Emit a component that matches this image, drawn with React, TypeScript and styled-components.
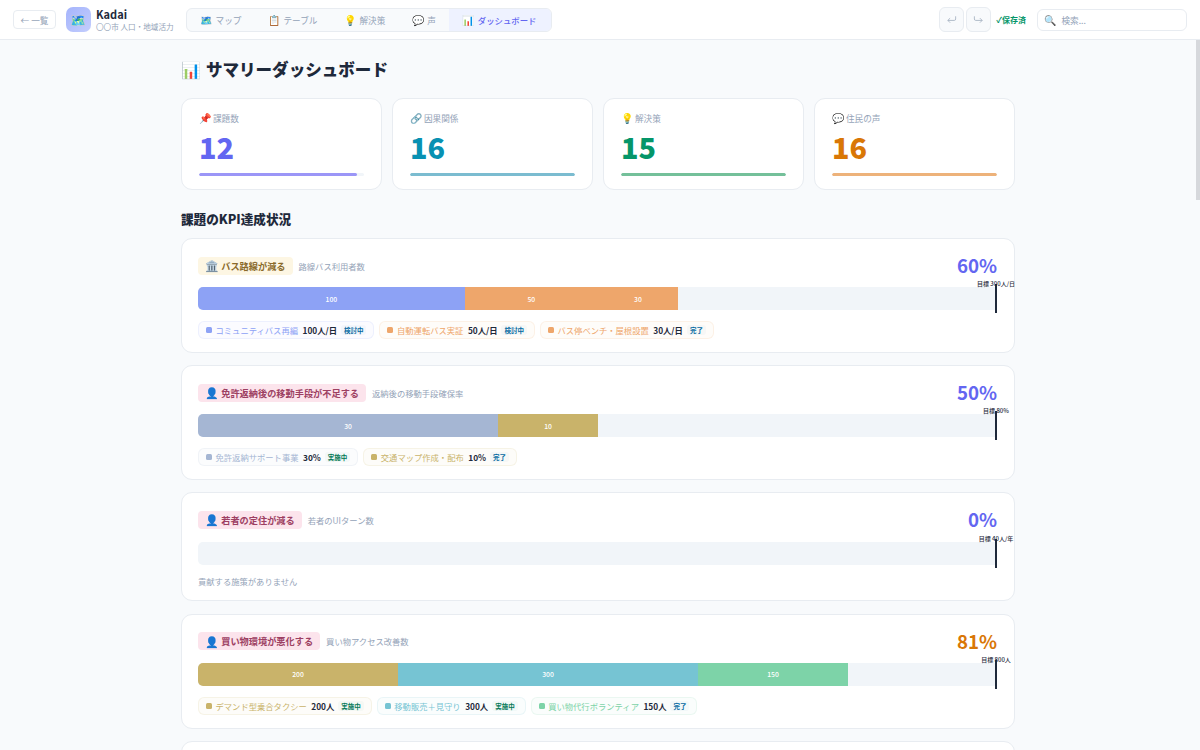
import { createGlobalStyle, styled } from "styled-components";

const GlobalStyle = createGlobalStyle`
  html, body {
    margin: 0;
    padding: 0;
    height: 100%;
    overflow: hidden;
  }
  body {
    font-family: "Noto Sans CJK JP", "Noto Sans", sans-serif;
    background: #f8fafc;
    color: #1e293b;
  }
  * {
    box-sizing: border-box;
  }
`;

const Shell = styled.div`
  position: relative;
  height: 100vh;
  display: flex;
  flex-direction: column;
`;

const Header = styled.header`
  height: 40px;
  flex: none;
  display: flex;
  align-items: center;
  padding: 0 13px;
  background: #fff;
  border-bottom: 1px solid #e8ecf1;
`;

const BackButton = styled.button`
  font: inherit;
  font-size: 8.64px;
  color: #94a3b8;
  height: 19px;
  width: 43px;
  padding: 0;
  margin-right: 10px;
  background: #fff;
  border: 1px solid #e8ecf1;
  border-radius: 4px;
`;

const Logo = styled.div`
  width: 25px;
  height: 25px;
  margin-right: 5px;
  border-radius: 7px;
  background: linear-gradient(135deg, #a5b4fc, #c3cdfd);
  display: flex;
  align-items: center;
  justify-content: center;
`;

const Brand = styled.div`
  display: flex;
  flex-direction: column;
  margin-right: 12px;
`;

const BrandName = styled.div`
  font-size: 11px;
  font-weight: 700;
  line-height: 14px;
  color: #1e293b;
`;

const BrandSub = styled.div`
  font-size: 7.6px;
  line-height: 11px;
  color: #94a3b8;
`;

const Tabs = styled.nav`
  display: flex;
  height: 24px;
  background: #f8fafc;
  border: 1px solid #e8ecf1;
  border-radius: 6px;
  overflow: hidden;
`;

const Tab = styled.div<{ $active?: boolean }>`
  display: flex;
  align-items: center;
  gap: 2.5px;
  padding: 0 ${(p) => (p.$active ? 15 : 13)}px 0 14px;
  font-size: ${(p) => (p.$active ? 8.4 : 8.64)}px;
  font-weight: ${(p) => (p.$active ? 500 : 400)};
  color: ${(p) => (p.$active ? "#6366f1" : "#94a3b8")};
  background: ${(p) => (p.$active ? "#eef2ff" : "transparent")};
`;

const Emoji = styled.span<{ $size?: number }>`
  font-size: ${(p) => p.$size ?? 10}px;
  font-family: "Noto Color Emoji", sans-serif;
  line-height: 1;
  margin-top: 2px;
`;

const HeaderRight = styled.div`
  margin-left: auto;
  display: flex;
  align-items: center;
  gap: 2px;
`;

const IconButton = styled.button`
  width: 25px;
  height: 25px;
  padding: 0;
  display: flex;
  align-items: center;
  justify-content: center;
  background: #f8fafc;
  color: #a3afc0;
  border: 1px solid #e8ecf1;
  border-radius: 6px;
`;

const Saved = styled.span`
  font-size: 8px;
  font-weight: 700;
  color: #059669;
  margin: 0 9px 0 3px;
`;

const Search = styled.div`
  width: 150px;
  height: 22px;
  display: flex;
  align-items: center;
  gap: 5px;
  padding: 0 6px;
  font-size: 8.64px;
  color: #94a3b8;
  background: #fff;
  border: 1px solid #e8ecf1;
  border-radius: 6px;
`;

const Scroller = styled.main`
  flex: 1;
  overflow: hidden;
  padding-right: 4px;
`;

const ScrollThumb = styled.div`
  position: absolute;
  top: 40px;
  right: 0;
  width: 4px;
  height: 160px;
  background: #d6d8dc;
`;

const Content = styled.div`
  width: 834px;
  margin: 0 auto;
  padding-top: 18px;
`;

const Title = styled.h1`
  margin: 0 0 17px;
  font-size: 16.56px;
  line-height: 23px;
  font-weight: 800;
  color: #1e293b;
  display: flex;
  align-items: center;
  gap: 5px;
`;

const StatGrid = styled.div`
  display: grid;
  grid-template-columns: repeat(4, 1fr);
  gap: 10px;
  margin-bottom: 18.5px;
`;

const Card = styled.section`
  background: #fff;
  border: 1px solid #e8ecf1;
  border-radius: 11px;
`;

const StatCard = styled(Card)`
  height: 92px;
  padding: 12px 17px;
`;

const StatLabel = styled.div`
  display: flex;
  align-items: center;
  gap: 1.5px;
  font-size: 8.64px;
  line-height: 14px;
  color: #94a3b8;
`;

const StatValue = styled.div<{ $color: string }>`
  font-size: 28.8px;
  font-weight: 900;
  line-height: 36px;
  color: ${(p) => p.$color};
  margin-top: 4px;
`;

const Progress = styled.div`
  height: 3.5px;
  margin-top: 7.5px;
  background: #f1f5f9;
  border-radius: 2px;
  overflow: hidden;
`;

const ProgressFill = styled.div<{ $color: string }>`
  height: 100%;
  background: ${(p) => p.$color};
  border-radius: 2px;
`;

const SectionTitle = styled.h2`
  margin: 0 0 10.5px;
  font-size: 12.6px;
  line-height: 19px;
  font-weight: 800;
  color: #1e293b;
`;

const KpiList = styled.div`
  display: flex;
  flex-direction: column;
  gap: 12.24px;
`;

const KpiCard = styled(Card)`
  padding: 18px 16px 13px;
`;

const PlaceholderCard = styled(Card)`
  height: 115px;
`;

const KpiHead = styled.div`
  display: flex;
  align-items: center;
  justify-content: space-between;
  height: 18px;
  margin-bottom: 12.2px;
  padding-right: 1px;
`;

const KpiTitle = styled.div`
  display: flex;
  align-items: center;
  gap: 6px;
  margin-top: -1px;
`;

const Tag = styled.span<{ $bg: string; $color: string }>`
  display: flex;
  align-items: center;
  gap: 2px;
  height: 18px;
  padding: 0 7px 0 7.5px;
  font-size: 9.2px;
  font-weight: 700;
  color: ${(p) => p.$color};
  background: ${(p) => p.$bg};
  border-radius: 4px;
`;

const Metric = styled.span`
  font-size: 8.3px;
  color: #94a3b8;
`;

const Percent = styled.span<{ $color: string }>`
  font-size: 18.72px;
  font-weight: 700;
  color: ${(p) => p.$color};
  margin-top: -3px;
`;

const BarWrap = styled.div`
  position: relative;
  height: 23px;
  margin-bottom: 10.8px;
`;

const Bar = styled.div`
  height: 100%;
  width: calc(100% - 3px);
  display: flex;
  background: #f1f5f9;
  border-radius: 5px 0 0 5px;
  overflow: hidden;
`;

const Segment = styled.div<{ $color: string }>`
  display: flex;
  align-items: center;
  justify-content: center;
  font-size: 6.8px;
  font-weight: 500;
  color: #fff;
  background: ${(p) => p.$color};
`;

const Marker = styled.div`
  position: absolute;
  top: -3px;
  right: 1px;
  width: 2px;
  height: 29px;
  background: #1e293b;
`;

const MarkerLabel = styled.span`
  position: absolute;
  top: -5px;
  left: 50%;
  transform: translateX(-50%);
  white-space: nowrap;
  font-size: 6px;
  line-height: 9px;
  font-weight: 500;
  color: #1e293b;
`;

const Chips = styled.div`
  display: flex;
  gap: 5px;
`;

const Chip = styled.div<{ $color: string }>`
  display: flex;
  align-items: center;
  height: 18px;
  padding: 0 7px;
  font-size: 8.3px;
  color: ${(p) => p.$color};
  background: ${(p) => p.$color}0a;
  border: 1px solid ${(p) => p.$color}22;
  border-radius: 6px;
`;

const ChipDot = styled.i<{ $color: string }>`
  width: 6px;
  height: 6px;
  margin-right: 3.5px;
  border-radius: 1.5px;
  background: ${(p) => p.$color};
`;

const ChipValue = styled.b`
  margin-left: 4.5px;
  font-weight: 700;
  color: #1e293b;
`;

const Status = styled.span<{ $color: string }>`
  margin-left: 4px;
  padding: 0 3px;
  font-size: 6.5px;
  font-weight: 700;
  color: ${(p) => p.$color};
  background: ${(p) => p.$color}08;
  border-radius: 3px;
`;

const Empty = styled.div`
  font-size: 8.3px;
  line-height: 12px;
  color: #94a3b8;
`;

type Item = { name: string; value: number; unit: string; color: string; status: string };

type Kpi = {
  icon: string;
  title: string;
  metric: string;
  tag: [string, string];
  percent: number;
  percentColor: string;
  target: string;
  max: number;
  items: Item[];
};

const blue = "#8da2f5";
const orange = "#eea66b";
const slate = "#a5b6d3";
const gold = "#c9b36a";
const teal = "#76c4d3";
const green = "#7dd3a8";

const pink: [string, string] = ["#fce4ec", "#9d3f62"];

const kpis: Kpi[] = [
  {
    icon: "🏛️",
    title: "バス路線が減る",
    metric: "路線バス利用者数",
    tag: ["#fdf6e3", "#8a6a2a"],
    percent: 60,
    percentColor: "#6366f1",
    target: "目標 300人/日",
    max: 300,
    items: [
      { name: "コミュニティバス再編", value: 100, unit: "人/日", color: blue, status: "検討中" },
      { name: "自動運転バス実証", value: 50, unit: "人/日", color: orange, status: "検討中" },
      { name: "バス停ベンチ・屋根設置", value: 30, unit: "人/日", color: orange, status: "完了" },
    ],
  },
  {
    icon: "👤",
    title: "免許返納後の移動手段が不足する",
    metric: "返納後の移動手段確保率",
    tag: pink,
    percent: 50,
    percentColor: "#6366f1",
    target: "目標 80%",
    max: 80,
    items: [
      { name: "免許返納サポート事業", value: 30, unit: "%", color: slate, status: "実施中" },
      { name: "交通マップ作成・配布", value: 10, unit: "%", color: gold, status: "完了" },
    ],
  },
  {
    icon: "👤",
    title: "若者の定住が減る",
    metric: "若者のUIターン数",
    tag: pink,
    percent: 0,
    percentColor: "#6366f1",
    target: "目標 40人/年",
    max: 40,
    items: [],
  },
  {
    icon: "👤",
    title: "買い物環境が悪化する",
    metric: "買い物アクセス改善数",
    tag: pink,
    percent: 81,
    percentColor: "#d97706",
    target: "目標 800人",
    max: 800,
    items: [
      { name: "デマンド型乗合タクシー", value: 200, unit: "人", color: gold, status: "実施中" },
      { name: "移動販売＋見守り", value: 300, unit: "人", color: teal, status: "実施中" },
      { name: "買い物代行ボランティア", value: 150, unit: "人", color: green, status: "完了" },
    ],
  },
];

const stats = [
  { icon: "📌", label: "課題数", value: 12, color: "#6366f1", bar: "#9b96f7", width: 96 },
  { icon: "🔗", label: "因果関係", value: 16, color: "#0891b2", bar: "#7bbcd0", width: 100 },
  { icon: "💡", label: "解決策", value: 15, color: "#059669", bar: "#74c09a", width: 100 },
  { icon: "💬", label: "住民の声", value: 16, color: "#d97706", bar: "#edb27a", width: 100 },
];

const tabs = [
  { icon: "🗺️", label: "マップ" },
  { icon: "📋", label: "テーブル" },
  { icon: "💡", label: "解決策" },
  { icon: "💬", label: "声" },
  { icon: "📊", label: "ダッシュボード", active: true },
];

const statusColor: Record<string, string> = {
  検討中: "#0369a1",
  実施中: "#047857",
  完了: "#0369a1",
};

function KpiRow({ kpi }: { kpi: Kpi }) {
  return (
    <KpiCard>
      <KpiHead>
        <KpiTitle>
          <Tag $bg={kpi.tag[0]} $color={kpi.tag[1]}>
            <Emoji $size={11}>{kpi.icon}</Emoji>
            {kpi.title}
          </Tag>
          <Metric>{kpi.metric}</Metric>
        </KpiTitle>
        <Percent $color={kpi.percentColor}>{kpi.percent}%</Percent>
      </KpiHead>
      <BarWrap>
        <Bar>
          {kpi.items.map((item) => (
            <Segment
              key={item.name}
              $color={item.color}
              style={{ width: `${(item.value / kpi.max) * 800}px` }}
            >
              {item.value}
            </Segment>
          ))}
        </Bar>
        <Marker>
          <MarkerLabel>{kpi.target}</MarkerLabel>
        </Marker>
      </BarWrap>
      {kpi.items.length === 0 ? (
        <Empty>貢献する施策がありません</Empty>
      ) : (
        <Chips>
          {kpi.items.map((item) => (
            <Chip key={item.name} $color={item.color}>
              <ChipDot $color={item.color} />
              {item.name}
              <ChipValue>
                {item.value}
                {item.unit}
              </ChipValue>
              <Status $color={statusColor[item.status]}>{item.status}</Status>
            </Chip>
          ))}
        </Chips>
      )}
    </KpiCard>
  );
}

export default function App() {
  return (
    <>
      <GlobalStyle />
      <Shell>
        <Header>
          <BackButton>← 一覧</BackButton>
          <Logo>
            <Emoji $size={13}>🗺️</Emoji>
          </Logo>
          <Brand>
            <BrandName>Kadai</BrandName>
            <BrandSub>〇〇市 人口・地域活力</BrandSub>
          </Brand>
          <Tabs>
            {tabs.map((t) => (
              <Tab key={t.label} $active={t.active}>
                <Emoji>{t.icon}</Emoji>
                {t.label}
              </Tab>
            ))}
          </Tabs>
          <HeaderRight>
            <IconButton>
              <svg width="11" height="11" viewBox="0 0 24 24" fill="none" stroke="currentColor" strokeWidth="1.8">
                <path d="M21 5v6a3 3 0 0 1-3 3H4" />
                <path d="M9 9l-5 5 5 5" />
              </svg>
            </IconButton>
            <IconButton>
              <svg width="11" height="11" viewBox="0 0 24 24" fill="none" stroke="currentColor" strokeWidth="1.8">
                <path d="M3 5v6a3 3 0 0 0 3 3h14" />
                <path d="M15 9l5 5-5 5" />
              </svg>
            </IconButton>
            <Saved>✓保存済</Saved>
            <Search>
              <Emoji>🔍</Emoji>
              検索...
            </Search>
          </HeaderRight>
        </Header>
        <Scroller>
          <Content>
            <Title>
              <Emoji $size={16}>📊</Emoji>
              サマリーダッシュボード
            </Title>
            <StatGrid>
              {stats.map((s) => (
                <StatCard key={s.label}>
                  <StatLabel>
                    <Emoji>{s.icon}</Emoji>
                    {s.label}
                  </StatLabel>
                  <StatValue $color={s.color}>{s.value}</StatValue>
                  <Progress>
                    <ProgressFill $color={s.bar} style={{ width: `${s.width}%` }} />
                  </Progress>
                </StatCard>
              ))}
            </StatGrid>
            <SectionTitle>課題のKPI達成状況</SectionTitle>
            <KpiList>
              {kpis.map((k) => (
                <KpiRow key={k.title} kpi={k} />
              ))}
              <PlaceholderCard />
            </KpiList>
          </Content>
        </Scroller>
        <ScrollThumb />
      </Shell>
    </>
  );
}
